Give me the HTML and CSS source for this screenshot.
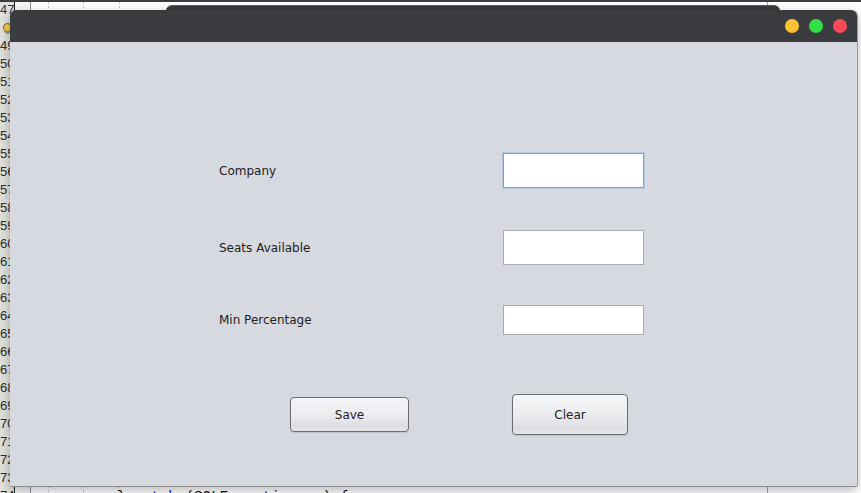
FILE: index.html
```html
<!DOCTYPE html>
<html lang="en">
<head>
<meta charset="utf-8">
<title>Company Form</title>
<link rel="stylesheet" href="styles.css">
</head>
<body>
<div class="ide">
  <div class="ide-top"></div>
  <div class="ide-main">
    <div class="gutter">
      <div class="lines">
        <div class="ln cur">47</div>
        <div class="ln"><svg class="bulb" width="9" height="11" viewBox="0 0 9 11"><path d="M4.5 0.5a4 4 0 0 1 2.4 7.2v1.3H2.1V7.7A4 4 0 0 1 4.5 0.5z" fill="#f2cf4a" stroke="#7a5a10" stroke-width="1"/><rect x="2.5" y="9" width="4" height="1.6" fill="#8a8a8a"/></svg></div>
        <div class="ln">49</div><div class="ln">50</div><div class="ln">51</div><div class="ln">52</div>
        <div class="ln">53</div><div class="ln">54</div><div class="ln">55</div><div class="ln">56</div>
        <div class="ln">57</div><div class="ln">58</div><div class="ln">59</div><div class="ln">60</div>
        <div class="ln">61</div><div class="ln">62</div><div class="ln">63</div><div class="ln">64</div>
        <div class="ln">65</div><div class="ln">66</div><div class="ln">67</div><div class="ln">68</div>
        <div class="ln">69</div><div class="ln">70</div><div class="ln">71</div><div class="ln">72</div>
        <div class="ln">73</div><div class="ln">74</div>
      </div>
    </div>
    <div class="fold"></div>
    <div class="editor">
      <div class="code">
        <div class="cl"></div><div class="cl"></div><div class="cl"></div><div class="cl"></div>
        <div class="cl"></div><div class="cl"></div><div class="cl"></div><div class="cl"></div>
        <div class="cl"></div><div class="cl"></div><div class="cl"></div><div class="cl"></div>
        <div class="cl"></div><div class="cl"></div><div class="cl"></div><div class="cl"></div>
        <div class="cl"></div><div class="cl"></div><div class="cl"></div><div class="cl"></div>
        <div class="cl"></div><div class="cl"></div><div class="cl"></div><div class="cl"></div>
        <div class="cl"></div><div class="cl"></div><div class="cl"></div>
        <div class="cl">          } <span class="kw">catch</span> (SQLException ex) {</div>
      </div>
    </div>
  </div>
</div>

<div class="backwin"></div>

<div class="window">
  <div class="titlebar">
    <span class="light yellow"></span>
    <span class="light green"></span>
    <span class="light red"></span>
  </div>
  <div class="content">
    <div class="form">
      <div class="row row1">
        <span class="label">Company</span>
        <div class="field focus"></div>
      </div>
      <div class="row row2">
        <span class="label">Seats Available</span>
        <div class="field"></div>
      </div>
      <div class="row row3">
        <span class="label">Min Percentage</span>
        <div class="field short"></div>
      </div>
      <div class="buttons">
        <button class="btn save">Save</button>
        <button class="btn clear">Clear</button>
      </div>
    </div>
  </div>
</div>
</body>
</html>
```

FILE: styles.css
```css
html, body {
  margin: 0;
  padding: 0;
}
body {
  width: 861px;
  height: 493px;
  overflow: hidden;
  position: relative;
  background: #ffffff;
  font-family: "DejaVu Sans", sans-serif;
}

/* ---------- IDE background ---------- */
.ide {
  display: flex;
  flex-direction: column;
  height: 493px;
}
.ide-top {
  height: 2px;
  background: #3c3d40;
  flex: none;
}
.ide-main {
  flex: 1;
  display: flex;
  overflow: hidden;
}
.gutter {
  width: 14px;
  flex: none;
  background: #e2e2dc;
  overflow: hidden;
}
.lines {
  margin-top: -1px;
}
.ln {
  height: 18px;
  line-height: 18px;
  font-family: "Liberation Sans", sans-serif;
  font-size: 13px;
  color: #2a2a2a;
  text-align: right;
  padding-right: 1px;
  white-space: nowrap;
}
.ln.cur {
  color: #1d3366;
}
.bulb {
  display: inline-block;
  vertical-align: middle;
  margin-right: 1px;
}
.fold {
  width: 15px;
  flex: none;
  border-left: 1px solid #222;
  border-right: 1px solid #8c8c8c;
  background: #f6f6f6;
}
.editor {
  flex: 1;
  background-color: #ffffff;
  background-image:
    linear-gradient(#c8c8c8 50%, transparent 50%),
    linear-gradient(#c8c8c8 50%, transparent 50%),
    linear-gradient(#c8c8c8 50%, transparent 50%),
    linear-gradient(#e08a8a, #e08a8a);
  background-size: 1px 4px, 1px 4px, 1px 4px, 1px 100%;
  background-repeat: repeat-y;
  background-position: 17px 0, 52px 0, 88px 0, 736px 0;
  overflow: hidden;
}
.code {
  margin-top: 0;
  font-family: "Liberation Mono", monospace;
  font-size: 14.3px;
}
.cl {
  height: 18px;
  line-height: 18px;
  white-space: pre;
  color: #111;
}
.kw {
  color: #0000e6;
}

/* ---------- window behind ---------- */
.backwin {
  position: absolute;
  left: 166px;
  top: 5px;
  width: 614px;
  height: 24px;
  background: #3a3b3f;
  border-top: 1px solid #5a5b5f;
  border-radius: 6px 6px 0 0;
}

/* ---------- main window ---------- */
.window {
  position: absolute;
  left: 10px;
  top: 10px;
  width: 847px;
  height: 476px;
  display: flex;
  flex-direction: column;
  border-radius: 6px 6px 0 0;
  box-shadow: 0 1px 0 #8e8e8e, 1px 0 0 #9a9a9a, 0 4px 12px rgba(0, 0, 0, 0.3);
  overflow: hidden;
}
.titlebar {
  height: 32px;
  flex: none;
  background: #3b3c40;
  display: flex;
  align-items: center;
  justify-content: flex-end;
  gap: 10px;
  padding-right: 10px;
}
.light {
  width: 14px;
  height: 14px;
  border-radius: 50%;
  margin-top: -1px;
}
.yellow { background: #fdc22f; }
.green  { background: #33e045; }
.red    { background: #f94b55; }

.content {
  flex: 1;
  background: #d6d9e0;
}
.form {
  padding-top: 111px;
  padding-left: 209px;
}
.row {
  display: flex;
  align-items: center;
}
.label {
  width: 284px;
  font-size: 12px;
  color: #1c1c1c;
}
.field {
  width: 139px;
  height: 33px;
  background: #ffffff;
  border: 1px solid #a9aaad;
}
.field.focus {
  border-color: #7c9fcd;
  box-shadow: 0 0 0 1px #b4c8e3;
}
.field.short {
  height: 28px;
}
.row2 {
  margin-top: 42px;
}
.row3 {
  margin-top: 40px;
}
.buttons {
  display: flex;
  align-items: center;
  height: 41px;
  margin-top: 59px;
  margin-left: 71px;
  gap: 103px;
}
.btn {
  font-family: "DejaVu Sans", sans-serif;
  font-size: 12px;
  color: #1c1c1c;
  border: 1px solid #6c6d71;
  border-radius: 4px;
  background: linear-gradient(#f5f6f8 0%, #eaebee 55%, #dcdee3 85%, #e6e8ec 100%);
  padding: 0;
  box-shadow: 0 1px 1px rgba(0, 0, 0, 0.12);
}
.btn.save {
  width: 119px;
  height: 35px;
}
.btn.clear {
  width: 116px;
  height: 41px;
}
```
